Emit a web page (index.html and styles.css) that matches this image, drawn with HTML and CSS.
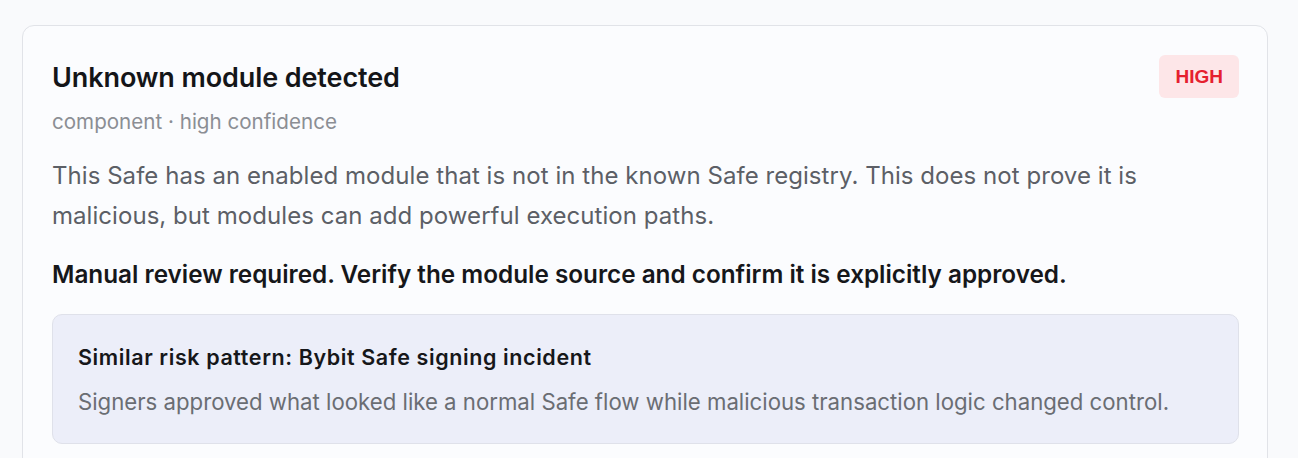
FILE: index.html
```html
<!DOCTYPE html>
<html lang="en">
<head>
<meta charset="utf-8">
<title>Finding</title>
<link rel="stylesheet" href="styles.css">
</head>
<body>
<div class="page">
  <section class="card">
    <div class="card-head">
      <div class="head-text">
        <h2 class="title">Unknown module detected</h2>
        <div class="meta">component · high confidence</div>
      </div>
      <span class="badge">HIGH</span>
    </div>
    <p class="desc">This Safe has an enabled module that is not in the known Safe registry. This does not prove it is malicious, but modules can add powerful execution paths.</p>
    <p class="action">Manual review required. Verify the module source and confirm it is explicitly approved.</p>
    <div class="pattern">
      <div class="pattern-title">Similar risk pattern: Bybit Safe signing incident</div>
      <div class="pattern-desc">Signers approved what looked like a normal Safe flow while malicious transaction logic changed control.</div>
    </div>
  </section>
</div>
</body>
</html>
```
FILE: styles.css
```css
html, body {
  margin: 0;
  padding: 0;
}
body {
  background: #f9fafc;
  font-family: Inter, "Noto Sans", sans-serif;
  color: #16171a;
}
.page {
  padding: 25px 30px 0 22px;
}
.card {
  background: #fbfcfe;
  border: 1px solid #e1e3e8;
  border-radius: 12px;
  padding: 29px 28px 40px 29px;
}
.card-head {
  display: flex;
  justify-content: space-between;
  align-items: flex-start;
}
.title {
  margin: 0;
  font-size: 27px;
  font-weight: 600;
  line-height: 46px;
  letter-spacing: -0.1px;
  color: #141518;
}
.meta {
  margin-top: 8px;
  font-size: 20.6px;
  line-height: 26px;
  color: #8b8e94;
}
.badge {
  background: #fde6e8;
  color: #e5202f;
  font-family: "Liberation Sans", Arial, sans-serif;
  font-weight: 700;
  font-size: 19px;
  line-height: 43px;
  padding: 0 16px 0 17px;
  border-radius: 6px;
}
.desc {
  margin: 21px 0 0;
  max-width: 1130px;
  font-size: 24px;
  letter-spacing: 0.05px;
  line-height: 40px;
  color: #5c5f66;
}
.action {
  margin: 23px 0 0;
  font-size: 24.3px;
  font-weight: 600;
  line-height: 30px;
  color: #16171a;
}
.pattern {
  margin-top: 25px;
  background: #eceef9;
  border: 1px solid #dfe1ea;
  border-radius: 10px;
  padding: 28px 25px 25px;
}
.pattern-title {
  font-size: 21.5px;
  font-weight: 600;
  letter-spacing: 0.6px;
  line-height: 28px;
  color: #16171a;
}
.pattern-desc {
  margin-top: 15px;
  font-size: 22.2px;
  line-height: 32px;
  color: #6a6d73;
}
```
